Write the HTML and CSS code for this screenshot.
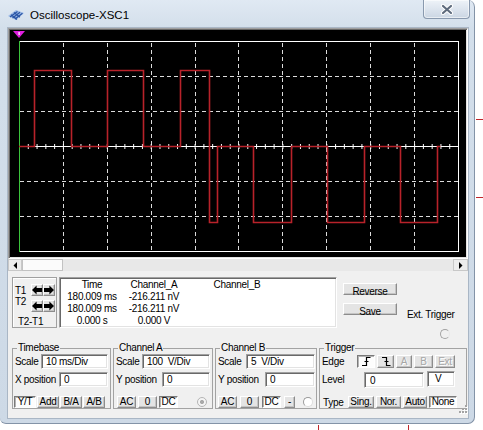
FILE: index.html
```html
<!DOCTYPE html>
<html>
<head>
<meta charset="utf-8">
<title>Oscilloscope-XSC1</title>
<link rel="stylesheet" href="styles.css">
</head>
<body>
<div class="window">
  <div class="titlebar">
    <svg class="app-icon" width="17" height="12" viewBox="0 0 17 12">
      <polygon points="0,7 8,1 16,4 8,11" fill="#9dbbe6"/>
      <g stroke="#2b56a6" stroke-width="1.3">
        <line x1="2" y1="8" x2="9.5" y2="2.5"/>
        <line x1="4.5" y1="9" x2="12" y2="3.3"/>
        <line x1="7" y1="10" x2="14.5" y2="4.2"/>
        <line x1="3" y1="5.8" x2="9" y2="10.5"/>
        <line x1="6" y1="3.6" x2="12" y2="8.2"/>
      </g>
    </svg>
    <span class="title">Oscilloscope-XSC1</span>
    <div class="close">
      <svg width="16" height="11" viewBox="0 0 16 11">
        <path d="M4,2 L12,9 M12,2 L4,9" stroke="#ffffff" stroke-width="4.2" stroke-linecap="round"/>
        <path d="M4,2 L12,9 M12,2 L4,9" stroke="#5e6b7d" stroke-width="2.2" stroke-linecap="round"/>
      </svg>
    </div>
  </div>

  <div class="client">
    <div class="screen">
      <svg class="plot" width="456" height="227" viewBox="0 0 456 227">
        <g stroke="#dcdcdc" stroke-width="1" stroke-dasharray="4 3" shape-rendering="crispEdges">
          <line x1="53.5" y1="13" x2="53.5" y2="221"/>
          <line x1="97.5" y1="13" x2="97.5" y2="221"/>
          <line x1="141.5" y1="13" x2="141.5" y2="221"/>
          <line x1="185.5" y1="13" x2="185.5" y2="221"/>
          <line x1="228.5" y1="13" x2="228.5" y2="221"/>
          <line x1="272.5" y1="13" x2="272.5" y2="221"/>
          <line x1="316.5" y1="13" x2="316.5" y2="221"/>
          <line x1="360.5" y1="13" x2="360.5" y2="221"/>
          <line x1="404.5" y1="13" x2="404.5" y2="221"/>
          <line x1="10" y1="46.5" x2="448" y2="46.5"/>
          <line x1="10" y1="81.5" x2="448" y2="81.5"/>
          <line x1="10" y1="151.5" x2="448" y2="151.5"/>
          <line x1="10" y1="186.5" x2="448" y2="186.5"/>
        </g>
        <g stroke="#ffffff" fill="none" shape-rendering="crispEdges">
          <path d="M9,11.5 H448.5 V221.5 H9"/>
          <line x1="9" y1="116.5" x2="448" y2="116.5"/>
        </g>
        <line x1="9" y1="116.5" x2="448" y2="116.5" stroke="#ffffff" stroke-width="5" stroke-dasharray="1 7.78"/>
        <line x1="9.5" y1="11" x2="9.5" y2="222" stroke="#3cc43c" stroke-width="1"/>
        <path d="M9,116.5 H24.5 V40.5 H61.5 V116.5 H97.5 V40.5 H133.5 V116.5 H170.5 V40.5 H199.5 V192.5 H207.5 V116.5 H243.5 V192.5 H281.5 V116.5 H317.5 V192.5 H354.5 V116.5 H390.5 V192.5 H427.5 V116.5 H430.5" fill="none" stroke="#b8222a" stroke-width="1.6"/>
        <polygon points="3,1 15,1 9,8" fill="#e01ee0"/>
        <rect x="8.5" y="2" width="1.2" height="3" fill="#ffffff"/>
      </svg>
    </div>

    <div class="hscroll">
      <div class="sb-btn">
        <svg width="5" height="7" viewBox="0 0 5 7"><polygon points="4,0 4,7 0.5,3.5" fill="#000"/></svg>
      </div>
      <div class="sb-thumb"></div>
      <div class="sb-track"></div>
      <div class="sb-btn sb-right">
        <svg width="5" height="7" viewBox="0 0 5 7"><polygon points="1,0 1,7 4.5,3.5" fill="#000"/></svg>
      </div>
    </div>

    <div class="info">
      <div class="tbox">
        <div class="tgrid">
          <span class="tlabel">T1</span>
          <button class="btn tarrow"><svg width="10" height="10" viewBox="0 0 10 10"><polygon points="0,5 4.6,0.5 4.6,3 10,3 10,7 4.6,7 4.6,9.5" fill="#000"/></svg></button>
          <button class="btn tarrow"><svg width="10" height="10" viewBox="0 0 10 10"><polygon points="10,5 5.4,0.5 5.4,3 0,3 0,7 5.4,7 5.4,9.5" fill="#000"/></svg></button>
          <span class="tlabel t2">T2</span>
          <button class="btn tarrow"><svg width="10" height="10" viewBox="0 0 10 10"><polygon points="0,5 4.6,0.5 4.6,3 10,3 10,7 4.6,7 4.6,9.5" fill="#000"/></svg></button>
          <button class="btn tarrow"><svg width="10" height="10" viewBox="0 0 10 10"><polygon points="10,5 5.4,0.5 5.4,3 0,3 0,7 5.4,7 5.4,9.5" fill="#000"/></svg></button>
        </div>
        <div class="tdiff">T2-T1</div>
      </div>

      <div class="readout">
        <span>Time</span><span>Channel_A</span><span>Channel_B</span>
        <span>180.009 ms</span><span>-216.211 nV</span><span></span>
        <span>180.009 ms</span><span>-216.211 nV</span><span></span>
        <span>0.000 s</span><span>0.000 V</span><span></span>
      </div>

      <div class="actions">
        <button class="btn wide">Reverse</button>
        <button class="btn wide">Save</button>
      </div>

      <div class="ext">
        <span>Ext. Trigger</span>
        <span class="radio radio-ext"></span>
      </div>
    </div>

    <div class="groups">
      <fieldset class="grp grp-tb">
        <legend>Timebase</legend>
        <div class="row r1"><span class="lbl">Scale</span><span class="field w67">10 ms/Div</span></div>
        <div class="row r2"><span class="lbl">X position</span><span class="field w49">0</span></div>
        <div class="row r3 tb-btns">
          <button class="btn on">Y/T</button>
          <button class="btn">Add</button>
          <button class="btn">B/A</button>
          <button class="btn">A/B</button>
        </div>
      </fieldset>

      <fieldset class="grp grp-a">
        <legend>Channel A</legend>
        <div class="row r1"><span class="lbl">Scale</span><span class="field w68">100&nbsp; V/Div</span></div>
        <div class="row r2"><span class="lbl">Y position</span><span class="field w48">0</span></div>
        <div class="row r3 ch-btns">
          <button class="btn">AC</button>
          <button class="btn">0</button>
          <button class="btn on">DC</button>
          <span class="radio radio-dis"></span>
        </div>
      </fieldset>

      <fieldset class="grp grp-b">
        <legend>Channel B</legend>
        <div class="row r1"><span class="lbl">Scale</span><span class="field w69">5&nbsp; V/Div</span></div>
        <div class="row r2"><span class="lbl">Y position</span><span class="field w50">0</span></div>
        <div class="row r3 chb-btns">
          <button class="btn">AC</button>
          <button class="btn">0</button>
          <button class="btn on">DC</button>
          <button class="btn minus">-</button>
          <span class="radio radio-off"></span>
        </div>
      </fieldset>

      <fieldset class="grp grp-trig">
        <legend>Trigger</legend>
        <div class="row r1">
          <span class="lbl lbl-edge">Edge</span>
          <div class="edge-btns">
            <button class="btn on e-rise"><svg width="10" height="9" viewBox="0 0 10 9"><path d="M1,8.5 H5.5 V0.5 H9.5 M3.5,4.5 H7.5" fill="none" stroke="#000" stroke-width="1.2"/></svg></button>
            <button class="btn e-fall"><svg width="10" height="9" viewBox="0 0 10 9"><path d="M1,0.5 H5.5 V8.5 H9.5 M3.5,4.5 H7.5" fill="none" stroke="#000" stroke-width="1.2"/></svg></button>
            <button class="btn dis e-a">A</button>
            <button class="btn dis e-b">B</button>
            <button class="btn dis e-ext">Ext</button>
          </div>
        </div>
        <div class="row r2">
          <span class="lbl lbl-level">Level</span>
          <span class="field level">0</span>
          <span class="field unit">V</span>
        </div>
        <div class="row r3">
          <span class="lbl lbl-type">Type</span>
          <div class="type-btns">
            <button class="btn t-sing">Sing.</button>
            <button class="btn t-nor">Nor.</button>
            <button class="btn t-auto">Auto</button>
            <button class="btn on t-none">None</button>
          </div>
        </div>
      </fieldset>
    </div>
  </div>

  <svg class="grip" width="12" height="12" viewBox="0 0 12 12">
    <g fill="#ffffff">
      <rect x="10" y="2" width="2" height="2"/><rect x="7" y="5" width="2" height="2"/><rect x="10" y="5" width="2" height="2"/>
      <rect x="4" y="8" width="2" height="2"/><rect x="7" y="8" width="2" height="2"/><rect x="10" y="8" width="2" height="2"/>
    </g>
    <g fill="#a4a4a4">
      <rect x="9" y="1" width="2" height="2"/><rect x="6" y="4" width="2" height="2"/><rect x="9" y="4" width="2" height="2"/>
      <rect x="3" y="7" width="2" height="2"/><rect x="6" y="7" width="2" height="2"/><rect x="9" y="7" width="2" height="2"/>
    </g>
  </svg>
</div>

<span class="wire wire-h w1"></span>
<span class="wire wire-h w2"></span>
<span class="wire wire-v w3"></span>
<span class="wire wire-v w4"></span>
</body>
</html>
```

FILE: styles.css
```css
* { box-sizing: border-box; }

html, body { margin: 0; padding: 0; }

body {
  position: relative;
  width: 483px;
  height: 430px;
  overflow: hidden;
  background: #ffffff;
  font-family: "Liberation Sans", Arial, sans-serif;
  font-size: 10px;
  letter-spacing: -0.3px;
  color: #000;
}

button {
  font: inherit;
  letter-spacing: inherit;
  color: inherit;
  margin: 0;
  padding: 0;
  cursor: default;
}

/* ---------- window frame ---------- */
.window {
  position: relative;
  width: 475px;
  height: 424px;
  background: linear-gradient(#e0e9f3 0, #d3dfeb 28px, #cdd9e6 100%);
  border-right: 1px solid #8393a7;
  border-bottom: 1px solid #8393a7;
  border-radius: 0 7px 7px 6px;
}

.titlebar {
  height: 28px;
  display: flex;
  align-items: center;
}

.app-icon { margin-left: 8px; margin-top: 2px; flex: none; }

.title {
  margin-left: 5px;
  margin-top: 2px;
  font-size: 11.5px;
  letter-spacing: 0;
  color: #000;
}

.close {
  align-self: flex-start;
  margin-left: auto;
  margin-right: 4px;
  width: 47px;
  height: 19px;
  border: 1px solid #8999ae;
  border-top: none;
  border-radius: 0 0 4px 4px;
  background: linear-gradient(#eef3f8, #dbe3ed 55%, #cbd6e3);
  box-shadow: inset 0 0 0 1px rgba(255, 255, 255, 0.55);
  display: flex;
  align-items: center;
  justify-content: center;
}

.client {
  margin-left: 8px;
  width: 460px;
  height: 390px;
  background: #f0f0f0;
  box-shadow: 0 0 0 1px #a9b6c5;
  display: flex;
  flex-direction: column;
}

/* ---------- scope screen ---------- */
.screen {
  height: 231px;
  flex: none;
  background: #000;
  border: 1px solid;
  border-color: #a0a0a0 #ffffff #ffffff #a0a0a0;
  box-shadow: inset 1px 1px 0 #696969, inset -1px -1px 0 #e3e3e3;
  padding: 1px;
}

.plot { display: block; }

.hscroll {
  height: 12px;
  flex: none;
  display: flex;
  background: #e7e7e7;
}

.sb-btn {
  width: 14px;
  height: 12px;
  background: #ececec;
  border: 1px solid #c8c8c8;
  display: flex;
  align-items: center;
  justify-content: center;
}

.sb-right { width: 15px; }

.sb-thumb {
  width: 41px;
  background: #fbfbfb;
  border: 1px solid #c2c2c2;
}

.sb-track {
  flex: 1;
  background: #e8e8e8;
}

/* ---------- info row ---------- */
.info {
  height: 71px;
  flex: none;
  display: flex;
  align-items: flex-start;
  padding: 6px 0 0 4px;
}

.tbox {
  width: 45px;
  height: 51px;
  border: 1px solid #a0a0a0;
  box-shadow: inset 1px 1px 0 #ffffff;
}

.tgrid {
  display: grid;
  grid-template-columns: 16px 12px 12px;
  grid-template-rows: 12px 12px;
  row-gap: 4px;
  padding: 6px 0 0 2px;
}

.tlabel { line-height: 12px; margin-top: 1px; }
.tlabel.t2 { margin-top: -4px; }

.tarrow {
  width: 12px;
  height: 12px;
  display: flex;
  align-items: center;
  justify-content: center;
}

.tdiff {
  margin-top: 4px;
  padding-left: 5px;
  line-height: 11px;
}

.readout {
  margin-left: 2px;
  width: 278px;
  height: 51px;
  background: #ffffff;
  border: 1px solid;
  border-color: #a0a0a0 #ffffff #ffffff #a0a0a0;
  box-shadow: inset 1px 1px 0 #696969, inset -1px -1px 0 #e3e3e3;
  padding: 1px;
  display: grid;
  grid-template-columns: 62px 62px 104px;
  grid-auto-rows: 12px;
  line-height: 12px;
  text-align: center;
}

.actions {
  margin-left: 6px;
  padding-top: 6px;
  display: flex;
  flex-direction: column;
  gap: 8px;
}

.wide { width: 54px; height: 17px; }

.ext {
  margin-left: 10px;
  padding-top: 32px;
  display: flex;
  flex-direction: column;
  line-height: 12px;
}

/* ---------- buttons ---------- */
.btn {
  height: 12px;
  line-height: 10px;
  text-align: center;
  background: #e4e4e4;
  border: 1px solid;
  border-color: #ffffff #8c8c8c #8c8c8c #ffffff;
  box-shadow: inset -1px -1px 0 #c4c4c4;
}

.btn.wide { line-height: 15px; }

.btn.on {
  background: #fdfdfd;
  border-color: #7a7a7a #ffffff #ffffff #7a7a7a;
  box-shadow: inset 1px 1px 0 #b4b4b4;
}

.btn.dis {
  color: #a6a6a6;
  text-shadow: 1px 1px 0 #ffffff;
}

/* ---------- radios ---------- */
.radio {
  display: block;
  width: 10px;
  height: 10px;
  border-radius: 50%;
  flex: none;
}

.radio-ext {
  margin: 8px 0 0 33px;
  border: 1px solid #a3a3a3;
  border-right-color: #e8e8e8;
}

.radio-dis {
  margin-left: auto;
  margin-right: 3px;
  border: 1px solid #b5b5b5;
  background: radial-gradient(circle, #a9a9a9 0 1.8px, #f4f4f4 2.3px);
}

.radio-off {
  margin-left: auto;
  margin-right: 2px;
  border: 1px solid #9a9a9a;
  border-right-color: #dcdcdc;
  border-bottom-color: #dcdcdc;
  background: #ffffff;
}

/* ---------- group boxes ---------- */
.groups {
  display: flex;
  gap: 2px;
  padding-left: 4px;
  flex: none;
}

.grp {
  margin: 0;
  min-width: 0;
  padding: 0 2px 0 1px;
  border: 1px solid #a3a3a3;
}

.grp legend {
  margin-left: 3px;
  padding: 0 1px;
  line-height: 12px;
}

.grp-tb { width: 99px; }
.grp-a { width: 100px; }
.grp-b { width: 102px; padding-right: 1px; }
.grp-trig { width: 148px; }

.row { display: flex; align-items: center; }
.r1 { height: 15px; }
.r2 { height: 16px; margin-top: 2px; }
.r3 { height: 12px; margin-top: 9px; }

.lbl { padding-left: 1px; white-space: nowrap; }

.field {
  display: block;
  margin-left: auto;
  height: 15px;
  background: #ffffff;
  border: 1px solid;
  border-color: #a0a0a0 #ffffff #ffffff #a0a0a0;
  box-shadow: inset 1px 1px 0 #696969, inset -1px -1px 0 #e3e3e3;
  padding-left: 4px;
  line-height: 13px;
  white-space: nowrap;
}

.w67 { width: 67px; }
.w49 { width: 49px; }
.w68 { width: 68px; }
.w48 { width: 48px; }
.w69 { width: 69px; }
.w50 { width: 50px; }

.tb-btns { gap: 1px; }
.tb-btns .btn { width: 22px; }

.ch-btns .btn { width: 19px; margin-left: 2px; }
.ch-btns .btn:first-child { margin-left: 2px; }

.chb-btns { gap: 3px; padding-left: 1px; }
.chb-btns .btn { width: 19px; }
.chb-btns .btn.minus { width: 11px; }

/* trigger */
.lbl-edge { width: 36px; }
.lbl-level { width: 43px; }
.lbl-type { width: 27px; padding-left: 2px; }

.edge-btns, .type-btns { display: flex; gap: 2px; }

.edge-btns .btn {
  height: 13px;
  display: flex;
  align-items: center;
  justify-content: center;
}

.e-rise { width: 18px; }
.e-fall { width: 17px; }
.e-a { width: 16px; }
.e-b { width: 19px; }
.e-ext { width: 20px; }

.r2 .field.level {
  margin-left: 0;
  width: 60px;
  height: 16px;
  line-height: 16px;
  padding-left: 5px;
  margin-top: 2px;
}

.r2 .field.unit {
  margin-left: 3px;
  width: 28px;
  height: 16px;
  line-height: 14px;
  padding-left: 7px;
}

.t-sing { width: 26px; }
.t-nor { width: 25px; }
.t-auto { width: 24px; }
.t-none { width: 28px; }

/* resize grip overlay */
.grip {
  position: absolute;
  left: 456px;
  top: 404px;
}

/* bits of the circuit canvas behind the window */
.wire {
  position: absolute;
  background: #c0262b;
}
.wire-h { height: 1px; width: 7px; left: 476px; }
.wire-v { width: 1px; height: 6px; top: 425px; }
.w1 { top: 119px; }
.w2 { top: 197px; }
.w3 { left: 318px; }
.w4 { left: 408px; }
```
